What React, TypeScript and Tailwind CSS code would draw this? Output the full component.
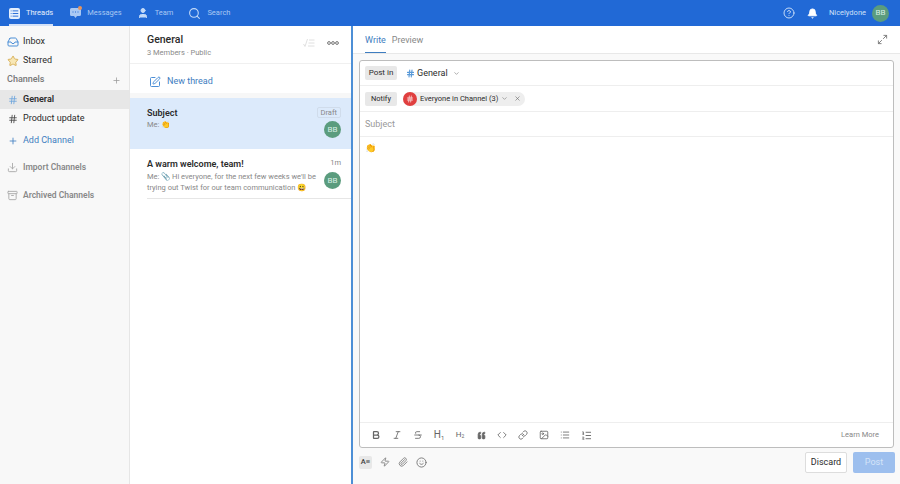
import {
  Archive,
  Bell,
  Bold,
  CircleHelp,
  Code,
  Download,
  Hash,
  Image as ImageIcon,
  Inbox,
  Italic,
  Link as LinkIcon,
  List,
  ListOrdered,
  Maximize2,
  Paperclip,
  Plus,
  Quote,
  Search,
  Smile,
  SquarePen,
  Star,
  Strikethrough,
  User,
  X,
  ChevronDown,
  Zap,
} from "lucide-react";

const font = { fontFamily: 'Roboto, "Liberation Sans", "Noto Sans", sans-serif' };

function Avatar() {
  return (
    <div className="flex h-[17px] w-[17px] shrink-0 items-center justify-center rounded-full bg-[#5b9c7e] text-[8px] text-[#d8efe4]">
      BB
    </div>
  );
}

function TopItem({
  icon,
  label,
  active = false,
}: {
  icon: React.ReactNode;
  label: string;
  active?: boolean;
}) {
  return (
    <div
      className={`flex h-full items-center gap-[6px] border-b-2 pt-[2px] ${
        active ? "mr-[2px] border-white/80 text-white/90" : "border-transparent text-[#a9c8f3]"
      }`}
    >
      {icon}
      <span className="text-[7.5px]">{label}</span>
    </div>
  );
}

function SideRow({
  icon,
  label,
  className = "",
}: {
  icon: React.ReactNode;
  label: string;
  className?: string;
}) {
  return (
    <div className={`flex h-[19px] items-center gap-[5px] pl-[7px] ${className}`}>
      <span className="flex w-[11px] shrink-0 items-center justify-center">{icon}</span>
      <span>{label}</span>
    </div>
  );
}

const toolbar = [
  <Bold key="b" size={10} strokeWidth={3} />,
  <Italic key="i" size={10} />,
  <Strikethrough key="s" size={10} />,
  <span key="h1" className="text-[10px] leading-none">H<sub className="text-[6px]">1</sub></span>,
  <span key="h2" className="text-[8px] leading-none">H<sub className="text-[5px]">2</sub></span>,
  <Quote key="q" size={9} fill="#666" strokeWidth={2} className="rotate-180" />,
  <Code key="c" size={10} />,
  <LinkIcon key="l" size={10} />,
  <ImageIcon key="im" size={10} />,
  <List key="li" size={10} />,
  <ListOrdered key="ol" size={11} />,
];

export default function App() {
  return (
    <div
      className="flex h-[484px] w-[900px] flex-col overflow-hidden bg-white text-[#2b2b2b] [&_svg]:shrink-0"
      style={font}
    >
      {/* top bar */}
      <header className="flex h-[26px] shrink-0 items-center justify-between bg-[#2169d6] pl-[9px] pr-[11px]">
        <div className="flex h-full items-center gap-[15px]">
          <TopItem
            active
            label="Threads"
            icon={
              <span className="flex h-[11px] w-[11px] items-center justify-center rounded-[2px] bg-[#e6f0fd]">
                <List size={9} color="#2169d6" strokeWidth={2.5} />
              </span>
            }
          />
          <TopItem
            label="Messages"
            icon={
              <span className="relative">
                <svg width="11" height="12" viewBox="0 0 11 12">
                  <path
                    d="M1.500 1h8A1.500 1.500 0 0 1 11 2.500v5A1.500 1.500 0 0 1 9.500 9H7l-1.500 2L4 9H1.500A1.500 1.500 0 0 1 0 7.500v-5A1.500 1.500 0 0 1 1.500 1z"
                    fill="#a9c8f3"
                  />
                  <path d="M2.500 5h1M5 5h1M7.500 5h1" stroke="#2169d6" strokeWidth="1" />
                </svg>
                <span className="absolute -right-[1px] -top-[1px] h-[4px] w-[4px] rounded-full bg-[#e8945a]" />
              </span>
            }
          />
          <TopItem label="Team" icon={<User size={12} color="#c5dbf8" fill="#c5dbf8" />} />
          <TopItem label="Search" icon={<Search size={13} color="#c5dbf8" />} />
        </div>
        <div className="flex items-center">
          <CircleHelp size={12} color="#c5dbf8" className="mr-[12px]" />
          <Bell size={11} color="#ffffff" fill="#ffffff" className="mr-[11px]" />
          <span className="mr-[6px] text-[7.5px] text-[#cfe0f8]">Nicelydone</span>
          <Avatar />
        </div>
      </header>

      <div className="flex min-h-0 flex-1">
        {/* channel sidebar */}
        <aside className="w-[130px] shrink-0 border-r border-[#e6e6e6] bg-[#f8f8f8] pt-[6px] text-[9px]">
          <SideRow icon={<Inbox size={12} color="#4d8fd6" />} label="Inbox" />
          <SideRow icon={<Star size={12} color="#d9b25b" fill="#f8e7b5" />} label="Starred" />
          <div className="flex h-[20px] items-center justify-between pl-[7px] pr-[8px] text-[#777]">
            <span className="font-medium">Channels</span>
            <Plus size={9} color="#999" />
          </div>
          <SideRow
            className="bg-[#e7e7e7] font-semibold"
            icon={<Hash size={10} color="#6ba3dc" />}
            label="General"
          />
          <SideRow icon={<Hash size={10} color="#444" />} label="Product update" />
          <div className="h-[3px]" />
          <SideRow className="text-[#3e7dc0]" icon={<Plus size={10} color="#3e7dc0" />} label="Add Channel" />
          <div className="h-[8px]" />
          <SideRow
            className="font-semibold text-[#888] text-[8.5px]"
            icon={<Download size={11} color="#aaa" />}
            label="Import Channels"
          />
          <div className="h-[9px]" />
          <SideRow
            className="font-semibold text-[#888] text-[8.5px]"
            icon={<Archive size={11} color="#aaa" />}
            label="Archived Channels"
          />
        </aside>

        {/* thread list */}
        <section className="w-[221px] shrink-0">
          <div className="flex h-[38px] items-start justify-between border-b border-[#f0f0f0] pl-[17px] pr-[12px] pt-[7px]">
            <div>
              <div className="text-[10.5px] font-medium leading-[13px]">General</div>
              <div className="mt-[2px] text-[7.5px] leading-[10px] text-[#8a8a8a]">3 Members · Public</div>
            </div>
            <div className="mt-[5px] flex items-center gap-[12px]">
              <svg width="12" height="10" viewBox="0 0 12 10" fill="none" stroke="#d8d8d8" strokeWidth="0.8">
                <path d="M0.500 6l1.500 2.500L4.500 1M6 2h5.500M5.500 5h6M5 8h6.500" />
              </svg>
              <svg width="12" height="4" viewBox="0 0 12 4" fill="none" stroke="#666" strokeWidth="0.9">
                <circle cx="2" cy="2" r="1.400" />
                <circle cx="6" cy="2" r="1.400" />
                <circle cx="10" cy="2" r="1.400" />
              </svg>
            </div>
          </div>
          <div className="flex h-[34px] items-center gap-[6px] border-b-[5px] border-[#f7f7f7] pl-[19px] pt-[6px] text-[9px] text-[#3e7dc0]">
            <SquarePen size={12} color="#4d8fd6" />
            <span>New thread</span>
          </div>
          <div className="h-[51px] bg-[#dceafb] pl-[17px] pr-[10px] pt-[9px]">
            <div className="flex items-start justify-between">
              <div>
                <div className="text-[9px] font-semibold leading-[12px]">Subject</div>
                <div className="text-[7.5px] leading-[12px] text-[#888]">Me: 👏</div>
              </div>
              <div className="flex flex-col items-end gap-[3px]">
                <span className="rounded-[2px] border border-[#d0dceb] px-[3px] text-[7.5px] leading-[9px] text-[#888]">Draft</span>
                <Avatar />
              </div>
            </div>
          </div>
          <div className="ml-[17px] flex h-[50px] justify-between border-b border-[#e6e6e6] pr-[10px] pt-[9px]">
            <div className="w-[172px]">
              <div className="text-[9px] font-semibold leading-[12px]">A warm welcome, team!</div>
              <div className="mt-[1px] text-[7.5px] leading-[11px] text-[#888]">
                Me: 📎 Hi everyone, for the next few weeks we'll be trying out Twist for our team communication 😀
              </div>
            </div>
            <div className="flex flex-col items-end gap-[4px]">
              <span className="text-[7.5px] leading-[10px] text-[#888]">1m</span>
              <Avatar />
            </div>
          </div>
        </section>

        {/* composer */}
        <main className="flex min-w-0 flex-1 flex-col border-l-2 border-[#4d8fd6] bg-[#f9f9f9]">
          <div className="flex h-[28px] shrink-0 items-stretch justify-between border-b border-[#e8e8e8] bg-white pl-[12px] pr-[12px]">
            <div className="flex gap-[6px] text-[9px]">
              <span className="flex items-center border-b border-[#3e7dc0] pt-[3px] text-[#3e7dc0]">Write</span>
              <span className="flex items-center pt-[3px] text-[#888]">Preview</span>
            </div>
            <div className="flex items-center">
              <Maximize2 size={11} color="#777" />
            </div>
          </div>

          <div className="mx-[6px] mt-[6px] flex h-[388px] flex-col rounded-[3px] border border-[#bdbdbd] bg-white">
            <div className="flex h-[25px] shrink-0 items-center border-b border-[#eeeeee] pl-[5px] text-[8px]">
              <span className="w-[32px] rounded-[2px] bg-[#e8e8e8] py-[2px] text-center leading-[10px]">Post in</span>
              <Hash size={9} color="#5a9ad8" className="ml-[9px]" strokeWidth={3} />
              <span className="ml-[2px] pt-[2px] text-[9px]">General</span>
              <ChevronDown size={7} color="#777" className="ml-[5px]" />
            </div>
            <div className="flex h-[26px] shrink-0 items-center border-b border-[#eeeeee] pl-[5px] text-[7.5px]">
              <span className="w-[32px] rounded-[2px] bg-[#e8e8e8] py-[2px] text-center leading-[10px]">Notify</span>
              <span className="ml-[6px] flex h-[14px] items-center rounded-full bg-[#eeeeee] pr-[4px]">
                <span className="flex h-[14px] w-[14px] items-center justify-center rounded-full bg-[#e03f3f]">
                  <Hash size={8} color="#ffffff" />
                </span>
                <span className="ml-[3px]">Everyone in Channel (3)</span>
                <ChevronDown size={7} color="#777" className="ml-[3px]" />
                <X size={7} color="#666" className="ml-[6px]" />
              </span>
            </div>
            <div className="flex h-[25px] shrink-0 items-center border-b border-[#eeeeee] pl-[5px] pt-[2px] text-[9px] text-[#999]">
              Subject
            </div>
            <div className="flex-1 pl-[5px] pt-[5px] text-[9px]">👏</div>
            <div className="flex h-[25px] shrink-0 items-center justify-between border-t border-[#eeeeee] pl-[11px] pr-[14px] text-[#666]">
              <div className="flex items-center gap-[11px]">
                {toolbar.map((tool, i) => (
                  <span key={i} className="flex w-[10px] items-center justify-center">
                    {tool}
                  </span>
                ))}
              </div>
              <span className="text-[7.5px] text-[#888]">Learn More</span>
            </div>
          </div>

          <div className="flex flex-1 items-center justify-between pb-[8px] pl-[6px] pr-[5px]">
            <div className="flex items-center gap-[8px] text-[#777]">
              <span className="flex h-[13px] w-[13px] items-center justify-center rounded-[2px] bg-[#e8e8e8] text-[7.5px] font-medium text-[#444]">
                A≡
              </span>
              <Zap size={10} />
              <Paperclip size={10} />
              <Smile size={11} />
            </div>
            <div className="flex items-center gap-[6px] text-[9px]">
              <span className="flex h-[21px] w-[42px] items-center justify-center rounded-[2px] border border-[#dddddd] bg-white pt-[1px]">
                Discard
              </span>
              <span className="flex h-[21px] w-[42px] items-center justify-center rounded-[2px] bg-[#9dbfee] pt-[1px] text-[#d5e4f8]">
                Post
              </span>
            </div>
          </div>
        </main>
      </div>
    </div>
  );
}
